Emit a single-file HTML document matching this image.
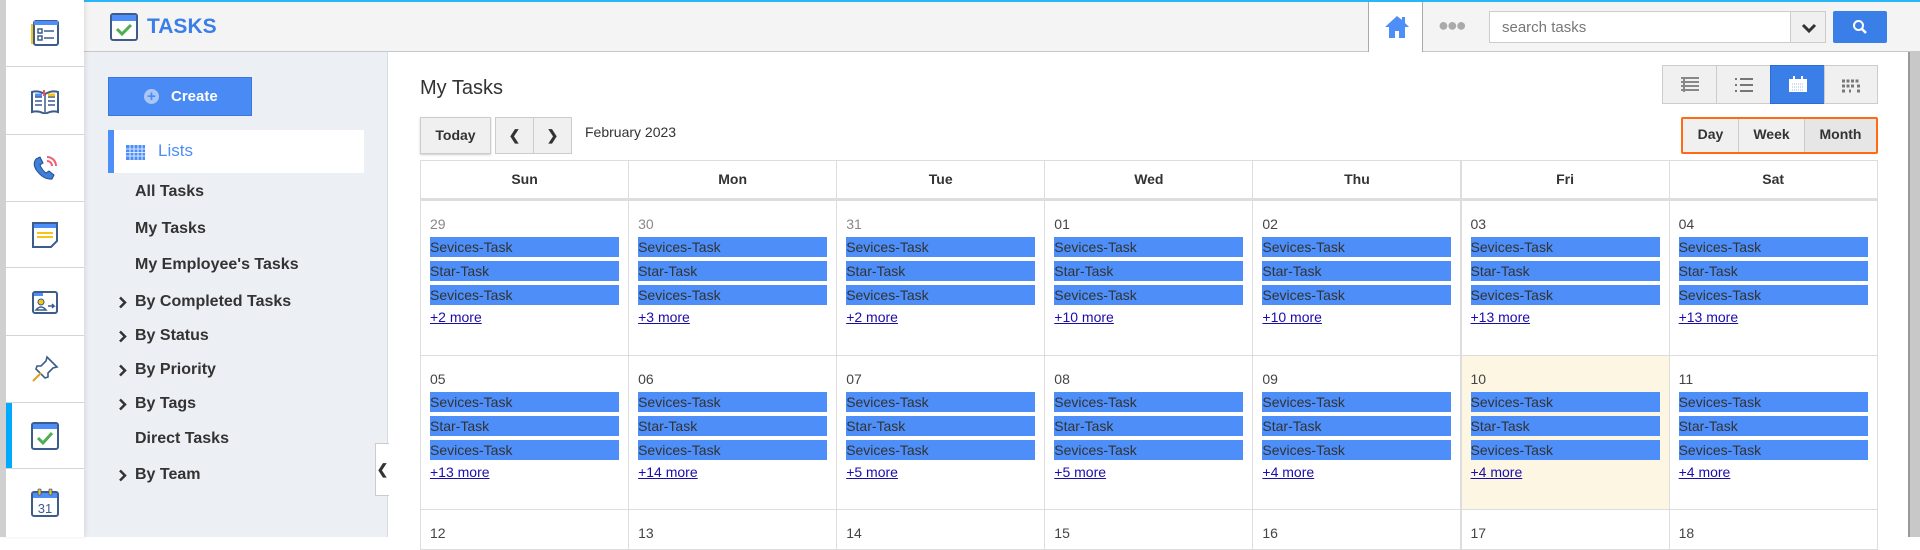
<!DOCTYPE html>
<html><head><meta charset="utf-8"><style>
*{box-sizing:border-box;margin:0;padding:0}
body{width:1920px;height:537px;overflow:hidden;background:#fff;font-family:"Liberation Sans",Arial,sans-serif;position:relative}
.a{position:absolute}
.rail{left:0;top:0;width:84px;height:537px;background:#fff;border-left:6px solid #d0d0d0;box-shadow:2px 0 4px rgba(0,0,0,.08);z-index:2}
.ri{position:absolute;left:0;width:78px;height:67px;border-bottom:1px solid #d5d5d5;display:flex;align-items:center;justify-content:center}
.hdr{left:84px;top:0;width:1836px;height:52px;background:#f4f4f4;border-top:2px solid #29b6f6;border-bottom:1px solid #c8c8c8}
.side{left:84px;top:52px;width:304px;height:485px;background:#eceff4;border-right:1px solid #d8dbe0}
.si{position:absolute;left:51px;font-size:16px;font-weight:bold;color:#333}
.chev{position:absolute;left:-17px;top:3px}
.cal{left:420px;top:160px;width:1457px}
.hc{position:absolute;top:0;height:41px;border:1px solid #ddd;border-bottom:3px solid #ddd;font-size:14px;font-weight:bold;color:#333;text-align:center;line-height:37px}
.c{position:absolute;border:1px solid #ddd;border-top:none;overflow:hidden}
.d{position:absolute;left:9px;top:15px;font-size:14px;color:#555}
.b{position:absolute;left:9px;right:9px;height:20px;background:#4d8ef8;color:#333;font-size:14px;line-height:20px}
.m{position:absolute;left:9px;font-size:14px;color:#1a0dab;text-decoration:underline}
.btn{position:absolute;background:#f0f0f0;border:1px solid #ccc;font-size:14px;font-weight:bold;color:#333;text-align:center}
</style></head><body>

<div class="a rail">
 <div class="ri" style="top:0"><svg width="30" height="28" viewBox="0 0 30 28"><rect x="1" y="5" width="5" height="20" fill="#f5c518"/><rect x="4" y="2" width="24" height="24" rx="2" fill="#fff" stroke="#3b5c8c" stroke-width="2"/><rect x="4" y="2" width="24" height="4" fill="#4d8ef8"/><rect x="8" y="10" width="4" height="4" fill="none" stroke="#3b5c8c" stroke-width="1.5"/><rect x="8" y="17" width="4" height="4" fill="none" stroke="#3b5c8c" stroke-width="1.5"/><path d="M14 12h10M14 19h10" stroke="#3b5c8c" stroke-width="1.5"/></svg></div>
 <div class="ri" style="top:67px;height:68px"><svg width="30" height="26" viewBox="0 0 30 26"><path d="M2 4q6-2 13 2q7-4 13-2v20q-6-2-13 2q-7-4-13-2z" fill="#fff" stroke="#3b5c8c" stroke-width="2"/><path d="M15 6v20" stroke="#3b5c8c" stroke-width="1.5"/><path d="M5 9h7M5 13h7M5 17h7M18 9h7M18 13h7M18 17h7" stroke="#3b5c8c" stroke-width="1.5"/><path d="M18 7h7" stroke="#f5c518" stroke-width="3"/><path d="M5 7h7" stroke="#4d8ef8" stroke-width="3"/><path d="M14 2v6" stroke="#e55" stroke-width="2"/></svg></div>
 <div class="ri" style="top:135px"><svg width="30" height="30" viewBox="0 0 30 30"><path d="M6 6l4-2 3 6-3 2q2 5 6 8l3-2 5 4-2 4q-8 1-15-8q-5-7-1-12z" fill="#3d7fd9" stroke="#244c8c" stroke-width="1"/><path d="M17 4a9 9 0 0 1 9 9M17 8a5 5 0 0 1 5 5" stroke="#f06070" stroke-width="2" fill="none"/></svg></div>
 <div class="ri" style="top:202px;height:66px"><svg width="28" height="28" viewBox="0 0 28 28"><path d="M2 2h24v18l-6 6H2z" fill="#fff" stroke="#3b5c8c" stroke-width="2"/><rect x="3" y="3" width="22" height="4" fill="#4d8ef8"/><path d="M6 12h16M6 16h16" stroke="#f5c518" stroke-width="2"/></svg></div>
 <div class="ri" style="top:268px;height:68px"><svg width="28" height="28" viewBox="0 0 28 28"><rect x="2" y="4" width="24" height="21" rx="2" fill="#fff" stroke="#3b5c8c" stroke-width="2"/><rect x="3" y="5" width="9" height="3" fill="#4d8ef8"/><circle cx="10" cy="14" r="3" fill="#f5c518" stroke="#3b5c8c"/><path d="M5 22q5-6 10 0z" fill="none" stroke="#3b5c8c" stroke-width="1.5"/><path d="M17 18h6l-2-2M23 18l-2 2" stroke="#3b5c8c" stroke-width="1.5" fill="none"/></svg></div>
 <div class="ri" style="top:336px"><svg width="30" height="30" viewBox="0 0 30 30"><path d="M17 3l10 10-4 1-5 5 0 4-3 1-9-9 1-3 4 0 5-5z" fill="#fff" stroke="#3b5c8c" stroke-width="1.6"/><path d="M11 19l-8 8" stroke="#e0a020" stroke-width="2"/></svg></div>
 <div class="ri" style="top:403px;height:66px;box-shadow:inset 6px 0 0 #00aaff"><svg width="30" height="30" viewBox="0 0 30 30"><rect x="2" y="2" width="26" height="26" rx="2" fill="#fff" stroke="#3b5c8c" stroke-width="2"/><rect x="3" y="3" width="24" height="5" fill="#4d8ef8"/><path d="M8 17l5 5 9-10" stroke="#4caf50" stroke-width="3" fill="none"/></svg></div>
 <div class="ri" style="top:469px;height:68px;border:none"><svg width="30" height="30" viewBox="0 0 30 30"><rect x="2" y="4" width="26" height="24" rx="2" fill="#fff" stroke="#3b5c8c" stroke-width="2"/><rect x="3" y="5" width="24" height="5" fill="#4d8ef8"/><rect x="8" y="1" width="3" height="6" rx="1" fill="#f5c518" stroke="#3b5c8c" stroke-width=".8"/><rect x="19" y="1" width="3" height="6" rx="1" fill="#f5c518" stroke="#3b5c8c" stroke-width=".8"/><text x="15" y="25" font-size="13" text-anchor="middle" fill="#3b5c8c" font-family="Liberation Sans">31</text></svg></div>
</div>

<div class="a hdr">
 <svg class="a" style="left:26px;top:11px" width="28" height="28" viewBox="0 0 28 28"><rect x="1" y="1" width="26" height="26" rx="2" fill="#fff" stroke="#3b5c8c" stroke-width="2"/><rect x="2" y="2" width="24" height="6" fill="#4d8ef8"/><path d="M7 16l5 5 9-9" stroke="#4caf50" stroke-width="3" fill="none"/></svg>
 <div class="a" style="left:63px;top:13px;font-size:21px;font-weight:bold;color:#3a7ee8">TASKS</div>
 <div class="a" style="left:1284px;top:0;width:55px;height:50px;background:#fff;border-left:1px solid #aaa;border-right:1px solid #aaa"><svg style="position:absolute;left:15px;top:12px" width="26" height="26" viewBox="0 0 26 26"><path d="M13 2L1 13h4v11h6v-7h4v7h6V13h4l-4-4V3h-3v3z" fill="#4d8ef8"/></svg></div>
 <div class="a" style="left:1354px;top:13px;font-size:18px;color:#aaa;letter-spacing:-2px">●●●</div>
 <div class="a" style="left:1405px;top:9px;width:302px;height:32px;background:#fff;border:1px solid #ccc;font-size:15px;color:#777;padding:7px 12px">search tasks</div>
 <div class="a" style="left:1706px;top:9px;width:36px;height:32px;background:#f0f0f0;border:1px solid #ccc"><svg style="position:absolute;left:10px;top:10px" width="16" height="12" viewBox="0 0 16 12"><path d="M2 3l6 6 6-6" stroke="#333" stroke-width="3" fill="none"/></svg></div>
 <div class="a" style="left:1749px;top:9px;width:54px;height:32px;background:#3a7ee8;border-radius:2px"><svg style="position:absolute;left:19px;top:8px" width="16" height="16" viewBox="0 0 16 16"><circle cx="6.5" cy="6.5" r="4.5" stroke="#fff" stroke-width="2" fill="none"/><path d="M10 10l4 4" stroke="#fff" stroke-width="2.5"/></svg></div>
</div>

<div class="a side">
 <div class="a" style="left:24px;top:25px;width:144px;height:39px;background:#4a8af4;border:1px solid #3a78e0;color:#fff;font-weight:bold;font-size:15px;line-height:37px;padding-left:62px"><span style="position:absolute;left:35px;top:11px;width:15px;height:15px;border-radius:50%;background:#a9c6f7;color:#4a8af4;font-size:15px;line-height:15px;text-align:center">+</span>Create</div>
 <div class="a" style="left:24px;top:78px;width:256px;height:43px;background:#fff;border-left:6px solid #4d8ef8"><svg style="position:absolute;left:12px;top:15px" width="19" height="15" viewBox="0 0 19 15"><rect width="19" height="15" fill="#4d8ef8"/><path d="M0 4h19M0 7.5h19M0 11h19M4 0v15M8 0v15M12 0v15M16 0v15" stroke="#fff" stroke-width=".8"/></svg><span style="position:absolute;left:44px;top:11px;font-size:17px;color:#4d8ef8">Lists</span></div>
 <div class="si" style="top:131px">All Tasks</div>
 <div class="si" style="top:168px">My Tasks</div>
 <div class="si" style="top:204px">My Employee's Tasks</div>
 <div class="si" style="top:241px"><svg class="chev" width="10" height="13" viewBox="0 0 10 13"><path d="M2 1.5l5 5-5 5" stroke="#333" stroke-width="2.5" fill="none"/></svg>By Completed Tasks</div>
 <div class="si" style="top:275px"><svg class="chev" width="10" height="13" viewBox="0 0 10 13"><path d="M2 1.5l5 5-5 5" stroke="#333" stroke-width="2.5" fill="none"/></svg>By Status</div>
 <div class="si" style="top:309px"><svg class="chev" width="10" height="13" viewBox="0 0 10 13"><path d="M2 1.5l5 5-5 5" stroke="#333" stroke-width="2.5" fill="none"/></svg>By Priority</div>
 <div class="si" style="top:343px"><svg class="chev" width="10" height="13" viewBox="0 0 10 13"><path d="M2 1.5l5 5-5 5" stroke="#333" stroke-width="2.5" fill="none"/></svg>By Tags</div>
 <div class="si" style="top:378px">Direct Tasks</div>
 <div class="si" style="top:414px"><svg class="chev" width="10" height="13" viewBox="0 0 10 13"><path d="M2 1.5l5 5-5 5" stroke="#333" stroke-width="2.5" fill="none"/></svg>By Team</div>
</div>
<div class="a" style="left:375px;top:443px;width:14px;height:53px;background:#fff;border:1px solid #ccc;border-right:none;font-size:14px;font-weight:bold;line-height:51px;text-align:center;color:#333">❮</div>

<div class="a" style="left:420px;top:77px;font-size:20px;color:#333">My Tasks</div>
<div class="btn" style="left:420px;top:117px;width:71px;height:37px;line-height:35px;box-shadow:0 1px 2px rgba(0,0,0,.2)">Today</div>
<div class="btn" style="left:495px;top:117px;width:39px;height:37px;line-height:35px">❮</div>
<div class="btn" style="left:533px;top:117px;width:39px;height:37px;line-height:35px">❯</div>
<div class="a" style="left:585px;top:124px;font-size:14px;color:#333">February 2023</div>

<div class="btn" style="left:1662px;top:65px;width:55px;height:39px"><svg style="margin-top:11px" width="18" height="15" viewBox="0 0 18 15"><path d="M0 1h18M0 5h18M0 9h18M0 13h18M3 0v15" stroke="#888" stroke-width="2"/></svg></div>
<div class="btn" style="left:1716px;top:65px;width:55px;height:39px"><svg style="margin-top:12px" width="18" height="14" viewBox="0 0 18 14"><path d="M0 1h2M5 1h13M0 7h2M5 7h13M0 13h2M5 13h13" stroke="#777" stroke-width="2"/></svg></div>
<div class="btn" style="left:1770px;top:65px;width:55px;height:39px;background:#3a7ee8;border-color:#2f6cd0"><svg style="margin-top:10px" width="18" height="16" viewBox="0 0 18 16"><rect y="3" width="18" height="13" fill="#fff"/><path d="M5 0v4M13 0v4" stroke="#fff" stroke-width="2"/><path d="M3 8h12M3 11h12M3 14h12" stroke="#9bbcf5" stroke-width="1" stroke-dasharray="1 1"/></svg></div>
<div class="btn" style="left:1824px;top:65px;width:54px;height:39px"><svg style="margin-top:13px" width="18" height="14" viewBox="0 0 18 14"><path d="M0 2h18M0 7h12M15 7h3M0 12h3M7 12h2M15 12h3" stroke="#777" stroke-width="3" stroke-dasharray="3 1.5"/></svg></div>

<div class="a" style="left:1681px;top:117px;width:197px;height:37px;border:2px solid #ff6a13;border-radius:2px;background:#f0f0f0"></div>
<div class="btn" style="left:1683px;top:119px;width:56px;height:33px;line-height:31px;border:none;border-right:1px solid #ccc">Day</div>
<div class="btn" style="left:1739px;top:119px;width:66px;height:33px;line-height:31px;border:none;border-right:1px solid #ccc">Week</div>
<div class="btn" style="left:1805px;top:119px;width:71px;height:33px;line-height:31px;border:none;background:#e6e6e6">Month</div>

<div class="a" style="left:1908px;top:52px;width:12px;height:485px;background:#c8c8c8;border-left:2px solid #999"></div>

<div class="a cal" id="cal"></div>
<script>
var cal=document.getElementById('cal'),W=208.1,days=['Sun','Mon','Tue','Wed','Thu','Fri','Sat'],h='';
for(var i=0;i<7;i++)h+='<div class="hc" style="left:'+(i*W)+'px;width:'+(W+1)+'px">'+days[i]+'</div>';
var r1=['29','30','31','01','02','03','04'],m1=[2,3,2,10,10,13,13],r2=['05','06','07','08','09','10','11'],m2=[13,14,5,5,4,4,4],r3=['12','13','14','15','16','17','18'];
function row(top,ht,ds,ms){for(var i=0;i<7;i++){var bg=(ds[i]=='10')?'#fcf6e3':'#fff';var col=(ds==r1&&i<3)?'#888':'#444';
h+='<div class="c" style="left:'+(i*W)+'px;top:'+top+'px;width:'+(W+1)+'px;height:'+ht+'px;background:'+bg+'"><div class="d" style="color:'+col+'">'+ds[i]+'</div>';
if(ms){h+='<div class="b" style="top:36px">Sevices-Task</div><div class="b" style="top:60px">Star-Task</div><div class="b" style="top:84px">Sevices-Task</div><div class="m" style="top:108px">+'+ms[i]+' more</div>';}
h+='</div>';}}
row(41,155,r1,m1);row(196,154,r2,m2);row(350,40,r3,null);
cal.innerHTML=h;
</script>
</body></html>
